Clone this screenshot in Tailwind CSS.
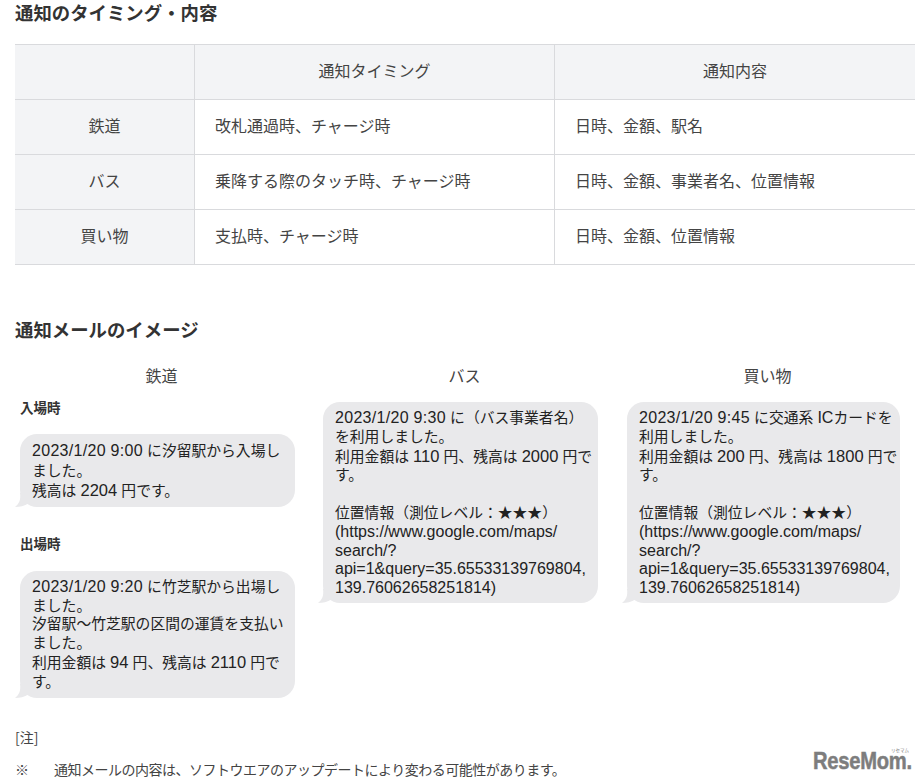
<!DOCTYPE html>
<html lang="ja">
<head>
<meta charset="utf-8">
<script src="https://cdn.jsdelivr.net/npm/@tailwindcss/browser@4"></script>
</head>
<body class="bg-white">
<div class="relative w-[924px] h-[783px] overflow-hidden font-['Noto_Sans_CJK_JP',sans-serif] text-[#444]">
  <div class="pl-[15px]">
    <h2 class="h-[44px] text-[18.4px] leading-[24px] font-bold text-[#333]">通知のタイミング・内容</h2>
    <div class="w-[900px] grid grid-cols-[180px_360px_360px] border-t border-[#d9dadd] text-[16px] leading-[24px]">
      <div class="h-[55px] bg-[#f3f4f6] border-r border-b border-[#d9dadd]"></div>
      <div class="h-[55px] bg-[#f3f4f6] border-r border-b border-[#d9dadd] flex items-center justify-center pb-[5px]">通知タイミング</div>
      <div class="h-[55px] bg-[#f3f4f6] border-b border-[#d9dadd] flex items-center justify-center pb-[5px]">通知内容</div>

      <div class="h-[55px] bg-[#f3f4f6] border-r border-b border-[#d9dadd] flex items-center justify-center pb-[5px]">鉄道</div>
      <div class="h-[55px] border-r border-b border-[#d9dadd] flex items-center pl-5 pb-[5px]">改札通過時、チャージ時</div>
      <div class="h-[55px] border-b border-[#d9dadd] flex items-center pl-5 pb-[5px]">日時、金額、駅名</div>

      <div class="h-[55px] bg-[#f3f4f6] border-r border-b border-[#d9dadd] flex items-center justify-center pb-[5px]">バス</div>
      <div class="h-[55px] border-r border-b border-[#d9dadd] flex items-center pl-5 pb-[5px]">乗降する際のタッチ時、チャージ時</div>
      <div class="h-[55px] border-b border-[#d9dadd] flex items-center pl-5 pb-[5px]">日時、金額、事業者名、位置情報</div>

      <div class="h-[55px] bg-[#f3f4f6] border-r border-b border-[#d9dadd] flex items-center justify-center pb-[5px]">買い物</div>
      <div class="h-[55px] border-r border-b border-[#d9dadd] flex items-center pl-5 pb-[5px]">支払時、チャージ時</div>
      <div class="h-[55px] border-b border-[#d9dadd] flex items-center pl-5 pb-[5px]">日時、金額、位置情報</div>
    </div>
    <h2 class="mt-[52px] text-[18.4px] leading-[24px] font-bold text-[#333]">通知メールのイメージ</h2>
  </div>

  <div class="mt-[22px] ml-[10px] w-[909px] grid grid-cols-3 items-start text-[#222] font-['Liberation_Sans','Noto_Sans_CJK_JP',sans-serif] text-[14.8px] whitespace-nowrap">
    <div>
      <div class="text-center text-[#444] text-[16px] leading-[24px] font-['Noto_Sans_CJK_JP',sans-serif]">鉄道</div>
      <div class="mt-[10px] ml-[10px] text-[13.5px] leading-[20px] font-bold text-[#333] font-['Noto_Sans_CJK_JP',sans-serif]">入場時</div>
      <div class="relative mt-[17px] ml-[10px] w-[275px] h-[73px] rounded-[17px] bg-[#e9e9eb] pl-3 pt-[7px] leading-[19.6px]">
        <svg class="absolute left-[-5px] bottom-0" width="14" height="14" viewBox="0 0 14 14"><path d="M5 0C6 7 4 11 0 14C5 14 9 13 14 10V0Z" fill="#e9e9eb"/></svg>
        <span class="relative"><span class="text-[16px] tracking-[0.3px]">2023/1/20 9:00</span> に汐留駅から入場し<br>ました。<br>残高は <span class="text-[16.5px]">2204</span> 円です。</span>
      </div>
      <div class="mt-[26px] ml-[10px] text-[13.5px] leading-[20px] font-bold text-[#333] font-['Noto_Sans_CJK_JP',sans-serif]">出場時</div>
      <div class="relative mt-[18px] ml-[10px] w-[275px] h-[127px] rounded-[17px] bg-[#e9e9eb] pl-3 pt-[7px] leading-[18.7px]">
        <svg class="absolute left-[-5px] bottom-0" width="14" height="14" viewBox="0 0 14 14"><path d="M5 0C6 7 4 11 0 14C5 14 9 13 14 10V0Z" fill="#e9e9eb"/></svg>
        <span class="relative"><span class="text-[16px] tracking-[0.3px]">2023/1/20 9:20</span> に竹芝駅から出場し<br>ました。<br>汐留駅～竹芝駅の区間の運賃を支払い<br>ました。<br>利用金額は <span class="text-[16.5px]">94</span> 円、残高は <span class="text-[16.5px]">2110</span> 円で<br>す。</span>
      </div>
    </div>
    <div>
      <div class="text-center text-[#444] text-[16px] leading-[24px] font-['Noto_Sans_CJK_JP',sans-serif]">バス</div>
      <div class="relative mt-[15px] ml-[10px] w-[275px] h-[201px] rounded-[17px] bg-[#e9e9eb] pl-3 pt-[7px] leading-[18.8px]">
        <svg class="absolute left-[-5px] bottom-0" width="14" height="14" viewBox="0 0 14 14"><path d="M5 0C6 7 4 11 0 14C5 14 9 13 14 10V0Z" fill="#e9e9eb"/></svg>
        <span class="relative"><span class="text-[16px] tracking-[0.3px]">2023/1/20 9:30</span> に（バス事業者名）<br>を利用しました。<br>利用金額は <span class="text-[16.5px]">110</span> 円、残高は <span class="text-[16.5px]">2000</span> 円で<br>す。<br><br>位置情報（測位レベル：★★★）<br><span class="text-[16px]">(https://www.google.com/maps/<br>search/?<br>api=1&amp;query=35.65533139769804,<br>139.76062658251814)</span></span>
      </div>
    </div>
    <div>
      <div class="text-center text-[#444] text-[16px] leading-[24px] font-['Noto_Sans_CJK_JP',sans-serif]">買い物</div>
      <div class="relative mt-[15px] ml-[11px] w-[273px] h-[201px] rounded-[17px] bg-[#e9e9eb] pl-3 pt-[7px] leading-[18.8px]">
        <svg class="absolute left-[-5px] bottom-0" width="14" height="14" viewBox="0 0 14 14"><path d="M5 0C6 7 4 11 0 14C5 14 9 13 14 10V0Z" fill="#e9e9eb"/></svg>
        <span class="relative"><span class="text-[16px] tracking-[0.3px]">2023/1/20 9:45</span> に交通系 <span class="text-[16px]">IC</span>カードを<br>利用しました。<br>利用金額は <span class="text-[16.5px]">200</span> 円、残高は <span class="text-[16.5px]">1800</span> 円で<br>す。<br><br>位置情報（測位レベル：★★★）<br><span class="text-[16px]">(https://www.google.com/maps/<br>search/?<br>api=1&amp;query=35.65533139769804,<br>139.76062658251814)</span></span>
      </div>
    </div>
  </div>

  <div class="absolute left-[15px] top-[725px] text-[14px] leading-[24px]">[注]</div>
  <div class="absolute left-[15px] top-[757px] flex text-[14px] leading-[24px] tracking-[-0.5px]">
    <span class="w-[39px]">※</span><span>通知メールの内容は、ソフトウエアのアップデートにより変わる可能性があります。</span>
  </div>
  <div class="absolute left-[813px] top-[745px] w-[100px] h-[30px] text-[#7d7d7d] font-['Liberation_Sans',sans-serif] font-bold">
    <span class="absolute left-[78px] top-[2px] text-[4.5px] leading-[6px] font-normal font-['Noto_Sans_CJK_JP',sans-serif]">リセマム</span>
    <span class="absolute left-0 top-[9px] text-[24px] leading-[14px] origin-left scale-x-[0.84] tracking-[-0.3px] [-webkit-text-stroke:0.5px_#7d7d7d]">ReseMom.</span>
  </div>
</div>
</body>
</html>
